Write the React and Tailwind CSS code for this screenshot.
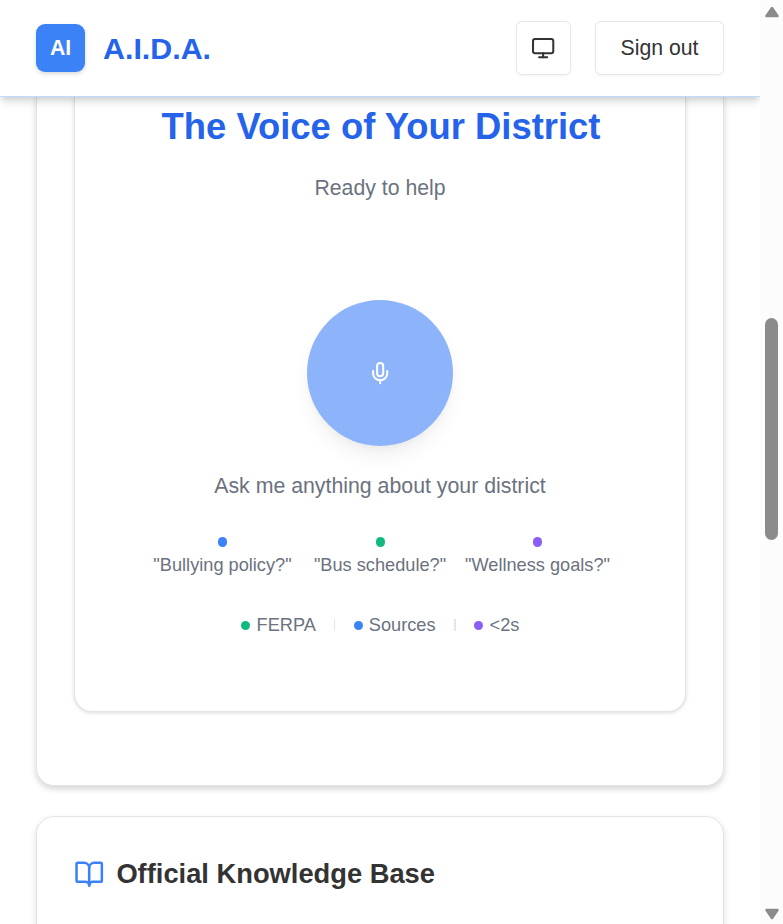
import { BookOpen, Mic, Monitor } from "lucide-react";

const prompts = [
  { text: '"Bullying policy?"', dot: "bg-[#3b82f6]", width: "w-[139px]" },
  { text: '"Bus schedule?"', dot: "bg-[#10b981]", width: "w-[132px]" },
  { text: '"Wellness goals?"', dot: "bg-[#8b5cf6]", width: "w-[145px]" },
];

function Header() {
  return (
    <header className="relative z-10 flex h-[97px] shrink-0 items-center justify-between border-b border-[#bfdbfe] bg-white pl-9 pr-9 shadow-[0_6px_9px_-1px_rgba(0,0,0,0.12),0_3px_6px_-2px_rgba(0,0,0,0.12)]">
      <div className="flex items-center gap-[18px]">
        <div className="flex h-12 w-[49px] items-center justify-center rounded-[9px] bg-[#3b82f6] text-[21.25px] leading-8 font-bold text-white shadow-[0_2px_4px_rgba(0,0,0,0.15)]">
          AI
        </div>
        <span className="text-[30.4px] leading-9 font-bold text-[#2563eb]">A.I.D.A.</span>
      </div>
      <div className="flex items-center gap-6">
        <button className="flex h-[54px] w-[55px] items-center justify-center rounded-[6px] border border-[#e5e7eb] bg-white shadow-[0_1px_3px_rgba(0,0,0,0.05)]">
          <Monitor size={24.3} strokeWidth={2} />
        </button>
        <button className="flex h-[54px] w-[129px] items-center justify-center rounded-[6px] border border-[#e5e7eb] bg-white text-[21.25px] leading-8 shadow-[0_1px_3px_rgba(0,0,0,0.05)]">
          Sign out
        </button>
      </div>
    </header>
  );
}

function Dot({ color, height = "h-[10px]" }) {
  return <span className={`w-[9px] shrink-0 rounded-full ${height} ${color}`} />;
}

function VoicePanel() {
  return (
    <section className="mx-[37px] flex h-[615px] flex-col items-center rounded-b-[18px] border border-t-0 border-[#e2e4e8] bg-white text-[#6b7280] shadow-[0_1px_4px_rgba(0,0,0,0.14)]">
      <h1 className="mt-[7px] pl-[2px] text-[36.4px] leading-[46px] font-bold whitespace-nowrap text-[#2563eb]">
        The Voice of Your District
      </h1>
      <p className="mt-[23px] text-[21.25px] leading-[30px]">Ready to help</p>
      <button className="mt-[97px] flex h-[146px] w-[146px] shrink-0 items-center justify-center rounded-full bg-[#8db4fa] text-white shadow-[0_12px_22px_-4px_rgba(0,0,0,0.07),0_4px_10px_-4px_rgba(0,0,0,0.05)]">
        <Mic size={24.3} strokeWidth={2} />
      </button>
      <p className="mt-[25px] text-[21.3px] leading-[30px]">Ask me anything about your district</p>
      <div className="mt-9 flex pl-[3px] text-[18.2px] leading-[24px]">
        {prompts.map((item, index) => (
          <div
            key={item.text}
            className={`flex flex-col items-center gap-[6px] whitespace-nowrap ${item.width} ${index === 0 ? "mr-[22px]" : index === 1 ? "mr-[19px]" : ""}`}
          >
            <Dot color={item.dot} />
            <span>{item.text}</span>
          </div>
        ))}
      </div>
      <div className="mt-9 flex items-center text-[18.2px] leading-[24px]">
        <div className="flex items-center gap-[7px]">
          <Dot color="bg-[#10b981]" height="h-[9px]" />
          FERPA
        </div>
        <span className="mr-[19px] ml-[18px] h-3 w-px bg-[#e2e8f0]" />
        <div className="flex items-center gap-[6px]">
          <Dot color="bg-[#3b82f6]" height="h-[9px]" />
          Sources
        </div>
        <span className="mr-[18px] ml-[18px] h-3 w-[2px] bg-[#e2e8f0]" />
        <div className="flex items-center gap-[7px]">
          <Dot color="bg-[#8b5cf6]" height="h-[9px]" />
          &lt;2s
        </div>
      </div>
    </section>
  );
}

function Scrollbar() {
  return (
    <aside className="flex w-[23px] shrink-0 flex-col items-center bg-[#fcfcfc] text-[#8b8b8b]">
      <svg className="mt-[6px] h-3 w-4 shrink-0" viewBox="0 0 16 12">
        <path d="M8 2 L13.5 10 H2.5 Z" fill="currentColor" stroke="currentColor" strokeWidth="2.5" strokeLinejoin="round" />
      </svg>
      <div className="mt-[300px] h-[222px] w-[13px] shrink-0 rounded-full bg-[#8b8b8b]" />
      <svg className="mt-auto mb-[4px] h-3 w-4 shrink-0" viewBox="0 0 16 12">
        <path d="M8 10 L13.5 2 H2.5 Z" fill="currentColor" stroke="currentColor" strokeWidth="2.5" strokeLinejoin="round" />
      </svg>
    </aside>
  );
}

export default function App() {
  return (
    <div className="flex h-[924px] w-[783px] overflow-hidden bg-white font-['Liberation_Sans',Arial,sans-serif] text-[#333333]">
      <div className="flex w-[760px] shrink-0 flex-col overflow-hidden">
        <Header />
        <main className="flex flex-col px-9">
          <div className="h-[689px] shrink-0 rounded-b-[18px] border border-t-0 border-[#e2e4e8] bg-white shadow-[0_3px_6px_rgba(0,0,0,0.17)]">
            <VoicePanel />
          </div>
          <section className="mt-[30px] h-[160px] shrink-0 rounded-t-[18px] border border-[#e2e4e8] bg-white pt-[36px] pl-[37px] shadow-[0_3px_6px_rgba(0,0,0,0.14)]">
            <div className="flex items-center gap-3">
              <BookOpen size={30.4} strokeWidth={2} className="mt-[2px] text-[#3b82f6]" />
              <h2 className="text-[27.3px] leading-[41px] font-bold">Official Knowledge Base</h2>
            </div>
          </section>
        </main>
      </div>
      <Scrollbar />
    </div>
  );
}
